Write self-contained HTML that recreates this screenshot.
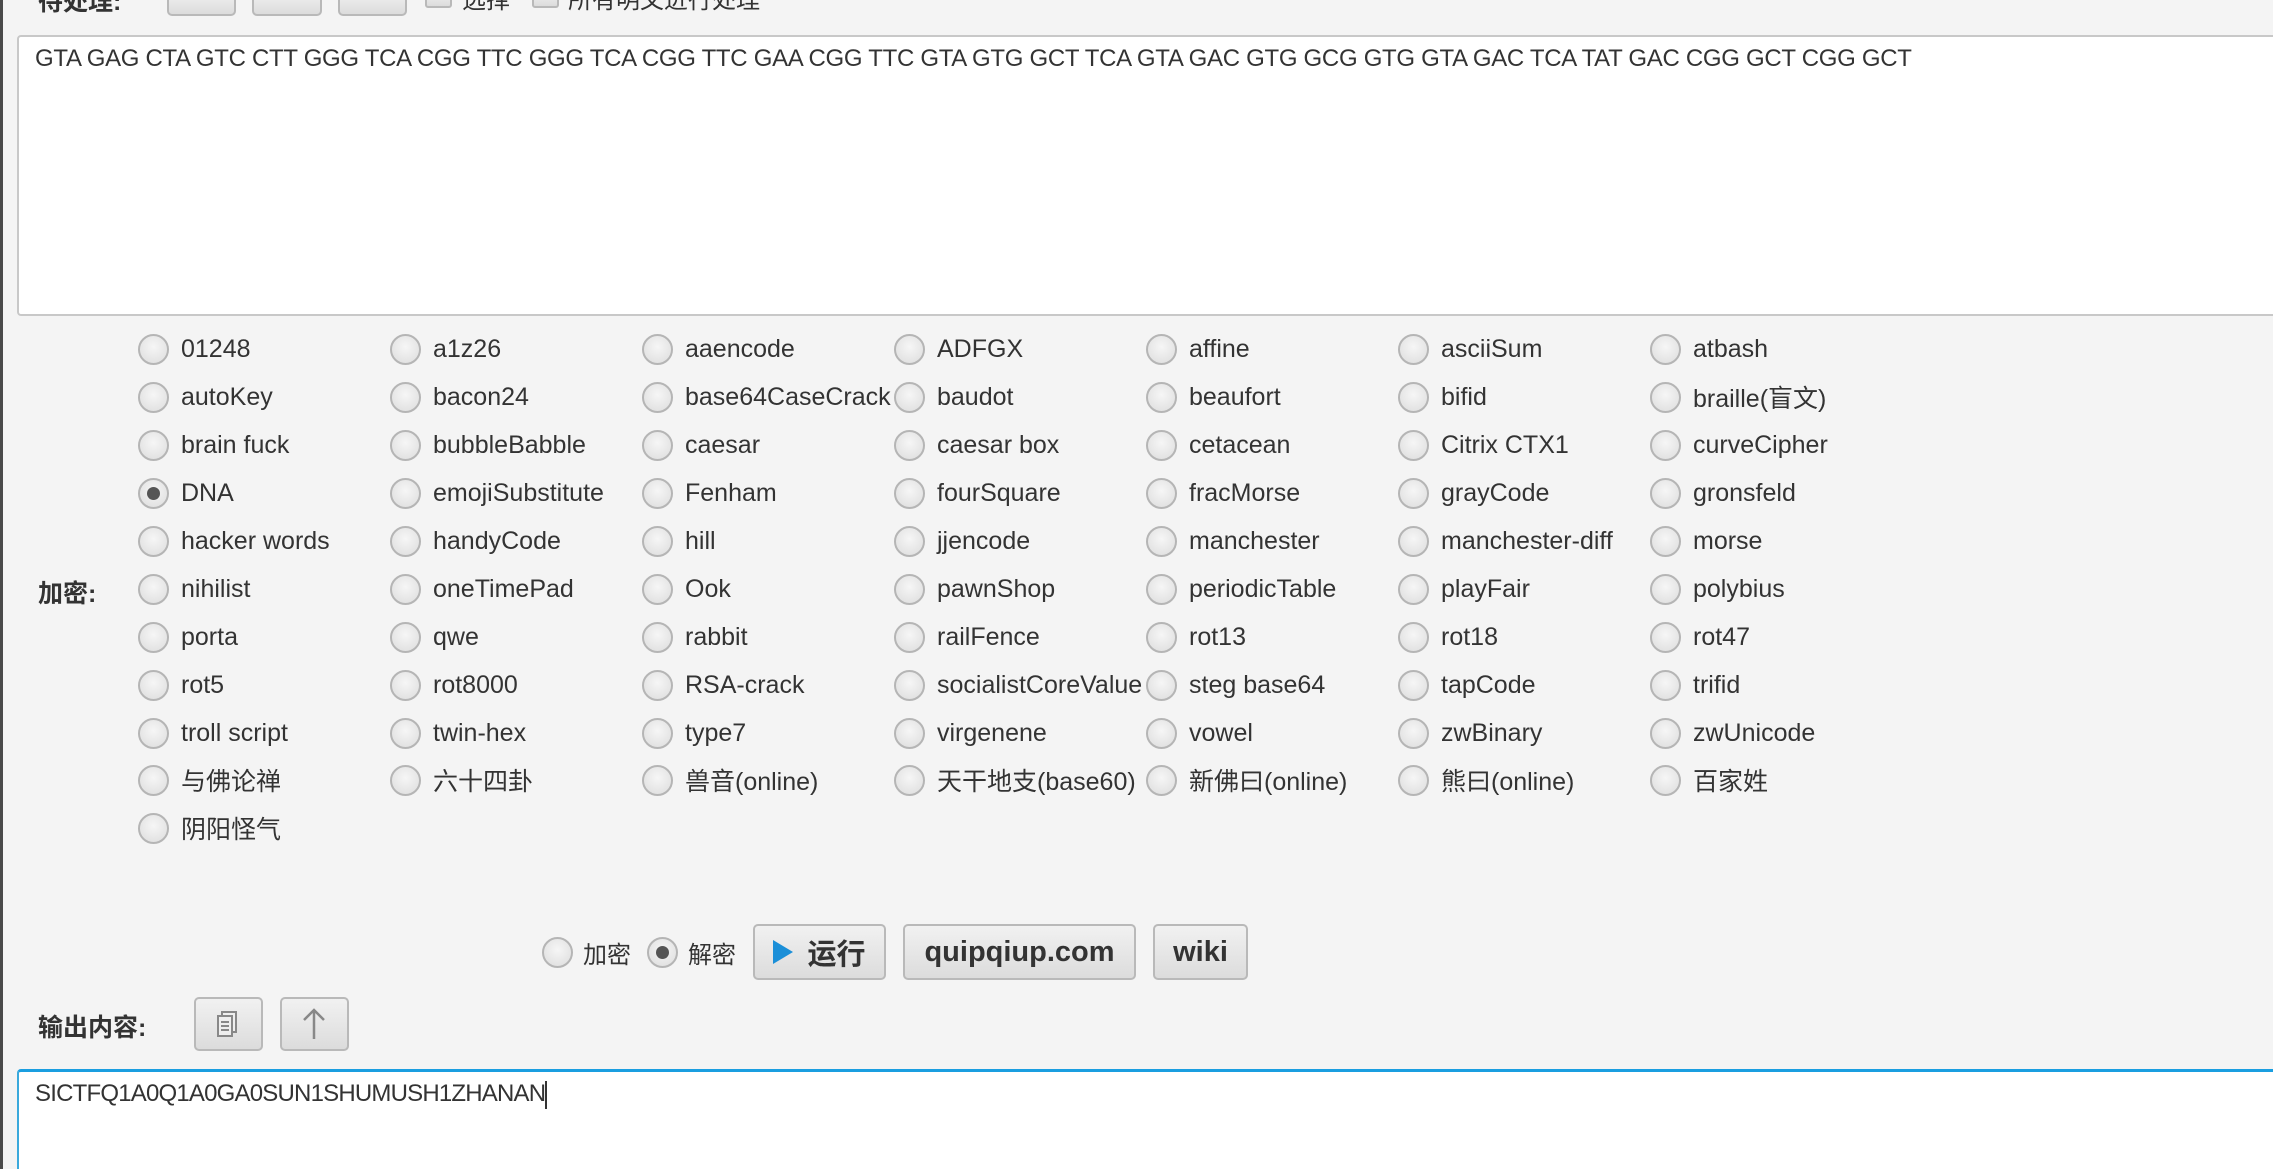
<!DOCTYPE html>
<html><head><meta charset="utf-8"><style>
*{box-sizing:border-box;margin:0;padding:0}
html{width:2273px;height:1169px;overflow:hidden}
body{width:2273px;height:1169px;overflow:hidden;background:#f4f4f4;font-family:"Liberation Sans","Noto Sans CJK SC",sans-serif;color:#333;position:relative}
.abs{position:absolute}
.btn{position:absolute;border:2px solid #b9b9b9;border-radius:5px;background:linear-gradient(#f1f1f1,#dcdcdc);}
.ta{position:absolute;background:#fff;border:2px solid #c8c8c8;border-radius:4px}
.row{position:absolute;left:138px;height:32px;display:flex}
.cell{width:252px;display:flex;align-items:center;font-size:25px;white-space:nowrap;color:#333}
.rb{width:31px;height:31px;border-radius:50%;border:2px solid #b5b5b5;background:radial-gradient(circle at 50% 40%,#f6f6f6,#dcdcdc);margin-right:12px;flex:none;position:relative}
.rb.on::after{content:"";position:absolute;left:7px;top:7px;width:13px;height:13px;border-radius:50%;background:#555}
.lbl{font-weight:bold;font-size:25px;color:#333}
</style></head><body>
<div class="abs" style="left:0;top:0;width:3px;height:1169px;background:#4a4a4a"></div>
<div class="abs lbl" style="left:38px;top:-18px">待处理:</div>
<div class="btn" style="left:167px;top:-10px;width:69px;height:26px"></div>
<div class="btn" style="left:252px;top:-10px;width:70px;height:26px"></div>
<div class="btn" style="left:338px;top:-10px;width:69px;height:26px"></div>
<div class="btn" style="left:425px;top:-10px;width:27px;height:18px;border-radius:3px"></div>
<div class="abs" style="left:462px;top:-20px;font-size:24px">选择</div>
<div class="btn" style="left:532px;top:-10px;width:27px;height:18px;border-radius:3px"></div>
<div class="abs" style="left:568px;top:-20px;font-size:24px">所有明文进行处理</div>

<div class="ta" style="left:17px;top:35px;width:2300px;height:281px">
<div style="position:absolute;left:16px;top:8px;font-size:24px;letter-spacing:-0.3px;color:#333">GTA GAG CTA GTC CTT GGG TCA CGG TTC GGG TCA CGG TTC GAA CGG TTC GTA GTG GCT TCA GTA GAC GTG GCG GTG GTA GAC TCA TAT GAC CGG GCT CGG GCT</div>
</div>

<div class="row" style="top:333px"><div class="cell"><span class="rb"></span>01248</div><div class="cell"><span class="rb"></span>a1z26</div><div class="cell"><span class="rb"></span>aaencode</div><div class="cell"><span class="rb"></span>ADFGX</div><div class="cell"><span class="rb"></span>affine</div><div class="cell"><span class="rb"></span>asciiSum</div><div class="cell"><span class="rb"></span>atbash</div></div>
<div class="row" style="top:381px"><div class="cell"><span class="rb"></span>autoKey</div><div class="cell"><span class="rb"></span>bacon24</div><div class="cell"><span class="rb"></span>base64CaseCrack</div><div class="cell"><span class="rb"></span>baudot</div><div class="cell"><span class="rb"></span>beaufort</div><div class="cell"><span class="rb"></span>bifid</div><div class="cell"><span class="rb"></span>braille(盲文)</div></div>
<div class="row" style="top:429px"><div class="cell"><span class="rb"></span>brain fuck</div><div class="cell"><span class="rb"></span>bubbleBabble</div><div class="cell"><span class="rb"></span>caesar</div><div class="cell"><span class="rb"></span>caesar box</div><div class="cell"><span class="rb"></span>cetacean</div><div class="cell"><span class="rb"></span>Citrix CTX1</div><div class="cell"><span class="rb"></span>curveCipher</div></div>
<div class="row" style="top:477px"><div class="cell"><span class="rb on"></span>DNA</div><div class="cell"><span class="rb"></span>emojiSubstitute</div><div class="cell"><span class="rb"></span>Fenham</div><div class="cell"><span class="rb"></span>fourSquare</div><div class="cell"><span class="rb"></span>fracMorse</div><div class="cell"><span class="rb"></span>grayCode</div><div class="cell"><span class="rb"></span>gronsfeld</div></div>
<div class="row" style="top:525px"><div class="cell"><span class="rb"></span>hacker words</div><div class="cell"><span class="rb"></span>handyCode</div><div class="cell"><span class="rb"></span>hill</div><div class="cell"><span class="rb"></span>jjencode</div><div class="cell"><span class="rb"></span>manchester</div><div class="cell"><span class="rb"></span>manchester-diff</div><div class="cell"><span class="rb"></span>morse</div></div>
<div class="row" style="top:573px"><div class="cell"><span class="rb"></span>nihilist</div><div class="cell"><span class="rb"></span>oneTimePad</div><div class="cell"><span class="rb"></span>Ook</div><div class="cell"><span class="rb"></span>pawnShop</div><div class="cell"><span class="rb"></span>periodicTable</div><div class="cell"><span class="rb"></span>playFair</div><div class="cell"><span class="rb"></span>polybius</div></div>
<div class="row" style="top:621px"><div class="cell"><span class="rb"></span>porta</div><div class="cell"><span class="rb"></span>qwe</div><div class="cell"><span class="rb"></span>rabbit</div><div class="cell"><span class="rb"></span>railFence</div><div class="cell"><span class="rb"></span>rot13</div><div class="cell"><span class="rb"></span>rot18</div><div class="cell"><span class="rb"></span>rot47</div></div>
<div class="row" style="top:669px"><div class="cell"><span class="rb"></span>rot5</div><div class="cell"><span class="rb"></span>rot8000</div><div class="cell"><span class="rb"></span>RSA-crack</div><div class="cell"><span class="rb"></span>socialistCoreValue</div><div class="cell"><span class="rb"></span>steg base64</div><div class="cell"><span class="rb"></span>tapCode</div><div class="cell"><span class="rb"></span>trifid</div></div>
<div class="row" style="top:717px"><div class="cell"><span class="rb"></span>troll script</div><div class="cell"><span class="rb"></span>twin-hex</div><div class="cell"><span class="rb"></span>type7</div><div class="cell"><span class="rb"></span>virgenene</div><div class="cell"><span class="rb"></span>vowel</div><div class="cell"><span class="rb"></span>zwBinary</div><div class="cell"><span class="rb"></span>zwUnicode</div></div>
<div class="row" style="top:764px"><div class="cell"><span class="rb"></span>与佛论禅</div><div class="cell"><span class="rb"></span>六十四卦</div><div class="cell"><span class="rb"></span>兽音(online)</div><div class="cell"><span class="rb"></span>天干地支(base60)</div><div class="cell"><span class="rb"></span>新佛曰(online)</div><div class="cell"><span class="rb"></span>熊曰(online)</div><div class="cell"><span class="rb"></span>百家姓</div></div>
<div class="row" style="top:812px"><div class="cell"><span class="rb"></span>阴阳怪气</div></div>

<div class="abs lbl" style="left:38px;top:574px">加密:</div>

<div class="row" style="left:542px;top:936px"><div class="cell" style="width:105px;font-size:24px"><span class="rb" style="margin-right:10px"></span>加密</div><div class="cell" style="width:110px;font-size:24px"><span class="rb on" style="margin-right:10px"></span>解密</div></div>

<div class="btn" style="left:753px;top:924px;width:133px;height:56px;display:flex;align-items:center;justify-content:center;font-weight:bold;font-size:29px"><span style="display:inline-block;width:0;height:0;border-left:20px solid #1b8fd8;border-top:12px solid transparent;border-bottom:12px solid transparent;margin-right:14px"></span>运行</div>
<div class="btn" style="left:903px;top:924px;width:233px;height:56px;display:flex;align-items:center;justify-content:center;font-weight:bold;font-size:29px">quipqiup.com</div>
<div class="btn" style="left:1153px;top:924px;width:95px;height:56px;display:flex;align-items:center;justify-content:center;font-weight:bold;font-size:29px">wiki</div>

<div class="abs lbl" style="left:38px;top:1008px">输出内容:</div>
<div class="btn" style="left:194px;top:997px;width:69px;height:54px">
<svg width="65" height="50" viewBox="0 0 65 50"><rect x="26" y="13" width="14" height="20" fill="#eee" stroke="#888" stroke-width="2"/><rect x="22" y="17" width="14" height="20" fill="#eee" stroke="#888" stroke-width="2"/><path d="M25 23h8M25 27h8M25 31h8" stroke="#888" stroke-width="2"/></svg></div>
<div class="btn" style="left:280px;top:997px;width:69px;height:54px">
<svg width="65" height="50" viewBox="0 0 65 50"><path d="M32 40V11M22 21l10-10 10 10" stroke="#888" stroke-width="2.5" fill="none"/></svg></div>

<div class="ta" style="left:17px;top:1069px;width:2256px;height:100px;border:2px solid #3aa9dc;border-top:3px solid #1a9ee0;border-right:none;border-bottom:none;border-radius:4px 0 0 0">
<div style="position:absolute;left:16px;top:8px;font-size:24px;letter-spacing:-0.8px;color:#333">SICTFQ1A0Q1A0GA0SUN1SHUMUSH1ZHANAN<span style="display:inline-block;width:2px;height:28px;background:#333;vertical-align:middle"></span></div>
</div>
</body></html>
